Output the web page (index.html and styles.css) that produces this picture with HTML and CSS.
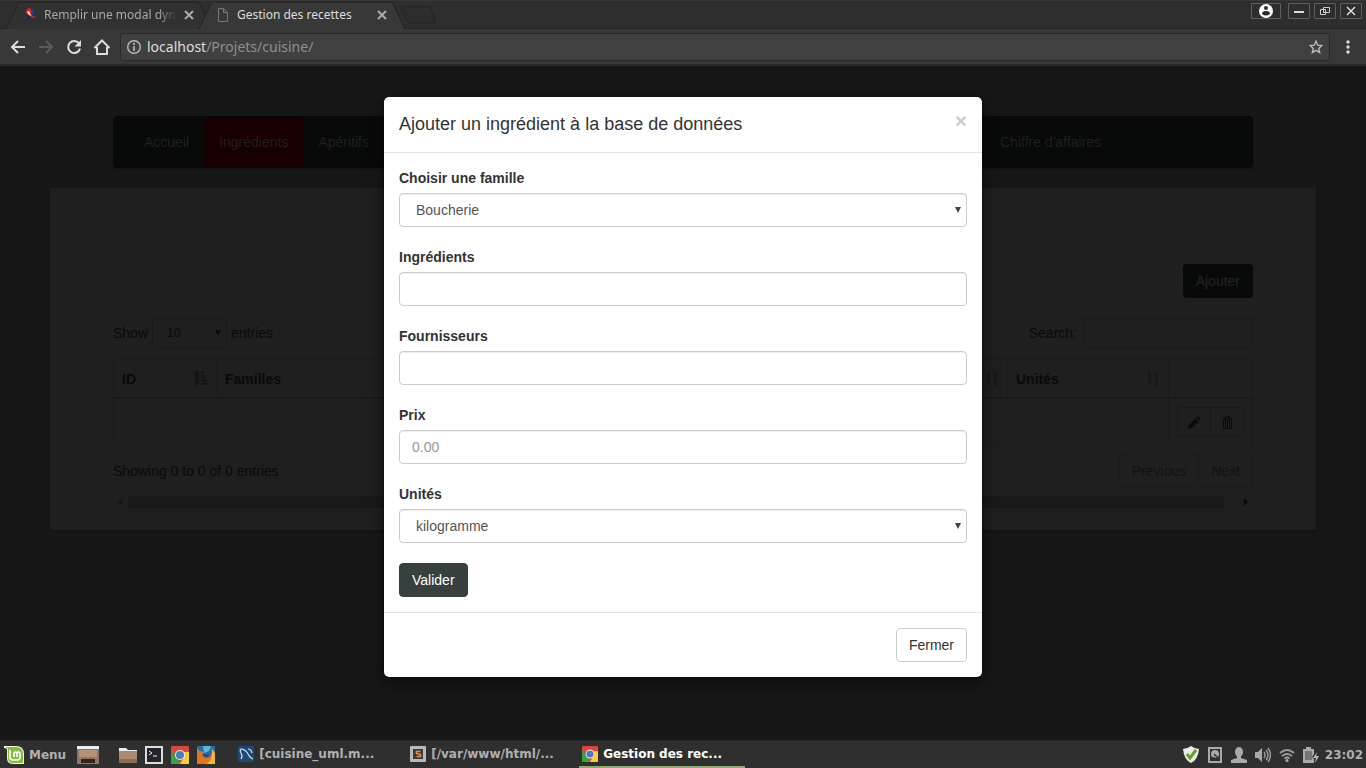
FILE: index.html
```html
<!DOCTYPE html>
<html lang="fr">
<head>
<meta charset="utf-8">
<title>Gestion des recettes</title>
<link rel="stylesheet" href="styles.css">
</head>
<body>
<svg class="defs" aria-hidden="true">
  <defs>
    <symbol id="close" viewBox="0 0 10 10"><path d="M1 1l8 8M9 1l-8 8" fill="none" stroke="currentColor" stroke-width="2"/></symbol>
    <symbol id="caret" viewBox="0 0 6 6"><path d="M0 0h6L3 6z" fill="currentColor"/></symbol>
    <symbol id="sort" viewBox="0 0 14 15"><path d="M2 0h3v10h2L3.500 15 0 10h2zM12 15H9V5H7l3.500-5L14 5h-2z" fill="currentColor"/></symbol>
    <symbol id="chrome" viewBox="0 0 18 18">
      <rect width="18" height="18" rx="1" fill="#e0443a"/><path d="M0 4l6 8 4 6H1q-1 0-1-1z" fill="#38a345"/><path d="M9 6h9v11q0 1-1 1H9l4-7z" fill="#f6cf3a"/><circle cx="9" cy="9" r="5" fill="#eee"/><circle cx="9" cy="9" r="4" fill="#3f7fc4"/>
    </symbol>
  </defs>
</svg>
<div class="desktop">
  <header class="chrome">
    <div class="tabstrip">
      <div class="tab">
        <svg class="tab-shape" viewBox="0 0 206 28" preserveAspectRatio="none"><path d="M0 28L12 3q1-2 3-2h176q2 0 3 2l12 25" fill="#313131" stroke="#222"/></svg>
        <svg class="fav" viewBox="0 0 14 14"><path d="M6 8l3-1 1 2-4 2-3 3 2-4z" fill="#14237f"/><path d="M3 3q1-3 4-3l2 3v5l4 1-4 1-3-3-3-2z" fill="#e8201b"/><path d="M4 4l2-1 2 5-2-1z" fill="#f5ede8"/><path d="M9 1l2 3-1 4-2-3z" fill="#253ca6"/></svg>
        <span class="tab-title fade">Remplir une modal dynamique</span>
        <button class="tab-close" aria-label="Fermer l'onglet"><svg width="10" height="10"><use href="#close"/></svg></button>
      </div>
      <div class="tab active">
        <svg class="tab-shape" viewBox="0 0 206 28" preserveAspectRatio="none"><path d="M0 28L12 3q1-2 3-2h176q2 0 3 2l12 25" fill="#383838" stroke="#222"/></svg>
        <svg class="fav" viewBox="0 0 14 14"><path d="M2.500.500h5l4 4v9h-9zM7.500.500v4h4" fill="none" stroke="#777"/></svg>
        <span class="tab-title">Gestion des recettes</span>
        <button class="tab-close" aria-label="Fermer l'onglet"><svg width="10" height="10"><use href="#close"/></svg></button>
      </div>
      <button class="new-tab" aria-label="Nouvel onglet"><svg width="36" height="18" viewBox="0 0 36 18"><path d="M3 1h24q2 0 3 2l4 12q1 2-1 2H9q-2 0-3-2L1 3q0-2 2-2z" fill="#2d2d2d" stroke="#242424"/></svg></button>
      <div class="window-buttons">
        <button class="profile" aria-label="Profil"><svg width="14" height="14" viewBox="0 0 14 14"><circle cx="7" cy="7" r="7" fill="#fff"/><circle cx="7" cy="4" r="2" fill="#2c2c2c"/><path d="M3 10q0-3 4-3t4 3q-4 3-8 0z" fill="#2c2c2c"/></svg></button>
        <button aria-label="Réduire"><svg width="10" height="10" viewBox="0 0 10 10"><path d="M0 6h10" stroke="#ddd" stroke-width="2"/></svg></button>
        <button aria-label="Restaurer"><svg width="10" height="10" viewBox="0 0 10 10"><path d="M3.500 1.500h6v5h-6zM.500 3.500h5v5h-5z" fill="none" stroke="#ccc"/></svg></button>
        <button aria-label="Fermer"><svg width="10" height="10" viewBox="0 0 10 10"><path d="M1 1l8 8M9 1L1 9" stroke="#ddd" stroke-width="1.500"/></svg></button>
      </div>
    </div>
    <div class="toolbar">
      <button aria-label="Précédent"><svg width="16" height="16" viewBox="0 0 16 16"><path d="M15 8H2M8 2L2 8l6 6" fill="none" stroke="#ddd" stroke-width="2"/></svg></button>
      <button aria-label="Suivant"><svg width="16" height="16" viewBox="0 0 16 16"><path d="M1 8h13M8 2l6 6-6 6" fill="none" stroke="#5c5c5c" stroke-width="2"/></svg></button>
      <button aria-label="Actualiser"><svg width="16" height="16" viewBox="0 0 16 16"><path d="M13 4.500A6 6 0 1 0 14 9.500" fill="none" stroke="#ddd" stroke-width="2"/><path d="M15 1v6.500H8.500z" fill="#ddd"/></svg></button>
      <button aria-label="Accueil"><svg width="18" height="16" viewBox="0 0 18 16"><path d="M1.500 9L9 1.500 16.500 9M4 8v7h10V8" fill="none" stroke="#ddd" stroke-width="2"/></svg></button>
      <div class="omnibox">
        <svg width="14" height="14" viewBox="0 0 14 14"><circle cx="7" cy="7" r="6.300" fill="none" stroke="#bbb" stroke-width="1.400"/><path d="M7 6v5M7 3v2" stroke="#bbb" stroke-width="1.600"/></svg>
        <span class="url"><b>localhost</b>/Projets/cuisine/</span>
        <svg width="14" height="14" viewBox="0 0 14 14"><path d="M7 1.200l1.700 4 4.200.4-3.200 2.800 1 4.200L7 10.400l-3.700 2.200 1-4.200L1.100 5.600l4.200-.4z" fill="none" stroke="#bbb" stroke-width="1.400"/></svg>
      </div>
      <button class="menu" aria-label="Menu"><svg width="4" height="14" viewBox="0 0 4 14"><circle cx="2" cy="2" r="1.700" fill="#ddd"/><circle cx="2" cy="7" r="1.700" fill="#ddd"/><circle cx="2" cy="12" r="1.700" fill="#ddd"/></svg></button>
    </div>
  </header>

  <main class="viewport">
    <nav class="navbar">
      <a href="#">Accueil</a>
      <a href="#" class="current">Ingrédients</a>
      <a href="#">Apéritifs</a>
      <a href="#" class="last">Chiffre d'affaires</a>
    </nav>
    <section class="panel">
      <div class="add-row"><button class="add">Ajouter</button></div>
      <div class="filters">
        <label>Show
          <span class="select-wrap small"><select><option>10</option></select><svg><use href="#caret"/></svg></span>
          entries</label>
        <label>Search:<input type="search"></label>
      </div>
      <table class="grid">
        <colgroup><col class="c-id"><col><col class="c-unit"><col class="c-act"></colgroup>
        <thead>
          <tr>
            <th><div class="th">ID<svg class="sorted" width="15" height="15" viewBox="0 0 15 15"><path d="M2 0h4v10h1l-3.500 5L0 10h2zM8 0h3v3H8zM8 4h4v3H8zM8 8h6v3H8zM8 12h7v2H8z" fill="currentColor"/></svg></div></th>
            <th><div class="th">Familles<svg width="14" height="15"><use href="#sort"/></svg></div></th>
            <th><div class="th">Unités<svg width="14" height="15"><use href="#sort"/></svg></div></th>
            <th></th>
          </tr>
        </thead>
        <tbody>
          <tr>
            <td colspan="3"></td>
            <td>
              <div class="actions">
                <button aria-label="Modifier"><svg width="13" height="13" viewBox="0 0 13 13"><path d="M0 13l1-4 6.500-6.500 3 3L4 12zM8.500 1.500L10 0l3 3-1.500 1.500z" fill="currentColor"/></svg></button>
                <button aria-label="Supprimer"><svg width="11" height="13" viewBox="0 0 11 13"><path d="M3.500 2V.500h4V2M0 2.500h11M1.500 4v8.500h8V4zM3.500 4v8M5.500 4v8M7.500 4v8" fill="none" stroke="currentColor"/></svg></button>
              </div>
            </td>
          </tr>
        </tbody>
      </table>
      <div class="table-foot">
        <span>Showing 0 to 0 of 0 entries</span>
        <div class="pager"><a href="#">Previous</a><a href="#">Next</a></div>
      </div>
      <div class="hscroll"><svg width="15" height="12"><path d="M9 2v8L5 6z" fill="#151515"/></svg><i></i><svg width="15" height="12"><path d="M6 2v8l4-4z" fill="#080808"/></svg></div>
    </section>

    <div class="overlay">
      <div class="modal" role="dialog" aria-labelledby="modal-title">
        <div class="modal-header">
          <h4 id="modal-title">Ajouter un ingrédient à la base de données</h4>
          <button class="modal-close" aria-label="Fermer">×</button>
        </div>
        <form class="modal-body">
          <div class="field"><label for="famille">Choisir une famille</label>
            <span class="select-wrap"><select id="famille"><option>Boucherie</option></select><svg><use href="#caret"/></svg></span></div>
          <div class="field"><label for="ingredient">Ingrédients</label><input id="ingredient" type="text"></div>
          <div class="field"><label for="fournisseur">Fournisseurs</label><input id="fournisseur" type="text"></div>
          <div class="field"><label for="prix">Prix</label><input id="prix" type="text" placeholder="0.00"></div>
          <div class="field"><label for="unite">Unités</label>
            <span class="select-wrap"><select id="unite"><option>kilogramme</option></select><svg><use href="#caret"/></svg></span></div>
          <button type="button" class="btn primary">Valider</button>
        </form>
        <div class="modal-footer"><button class="btn">Fermer</button></div>
      </div>
    </div>
  </main>

  <footer class="taskbar">
    <button class="mint"><svg width="20" height="20" viewBox="0 0 20 20"><path d="M0 1h12q8 0 8 8v10H9q-6 0-6-6V5Q3 3 0 3z" fill="#f2f7ea"/><path d="M1.500 2H12q7 0 7 7v9H9q-5 0-5-5V5q0-2-2.500-3z" fill="#84bf42"/><path d="M6 5v7q0 3 3 3h4q3 0 3-3V9q0-2-1.500-2T13 9v3M13 9q0-2-1.500-2T10 9v3" fill="none" stroke="#fff" stroke-width="1.600"/></svg>Menu</button>
    <div class="launchers">
      <button class="desk" aria-label="Bureau"><svg width="22" height="18" viewBox="0 0 22 18"><path d="M0 3h22v15H0z" fill="#95735d"/><path d="M2 4h18v7H2z" fill="#b7927a"/><path d="M0 0h22v3H0z" fill="#eee"/><path d="M4 13h14v4H4z" fill="#33251c"/></svg></button>
      <button aria-label="Fichiers"><svg width="18" height="18" viewBox="0 0 18 18"><path d="M0 2h7l2 2h9v3H0z" fill="#eee"/><path d="M0 5h18v11H0z" fill="#ab8a72"/><path d="M0 13h18v4H0z" fill="#8c6c57"/></svg></button>
      <button aria-label="Terminal"><svg width="18" height="18" viewBox="0 0 18 18"><rect x="1" y="1" width="16" height="16" fill="#24242d" stroke="#ddd" stroke-width="2"/><path d="M4 5l3 2-3 2M8 10h4" fill="none" stroke="#eee"/></svg></button>
      <button aria-label="Chrome"><svg width="18" height="18"><use href="#chrome"/></svg></button>
      <button aria-label="Firefox"><svg width="18" height="18" viewBox="0 0 18 18"><rect width="18" height="18" rx="1" fill="#2a6ca8"/><path d="M6 0h8l-2 5-5 2z" fill="#5db4dc"/><path d="M0 2l3 3 4 1-2 3 3 3 5-1 2-5-1-4 4 4v12H0z" fill="#e2741b"/><path d="M15 3l3 5v10H9q7-3 6-15z" fill="#f6b63b"/><path d="M6 8l4 1 2-2-1 4-4-1z" fill="#174573"/></svg></button>
    </div>
    <div class="tasks">
      <button><svg width="16" height="16" viewBox="0 0 16 16"><rect width="16" height="16" rx="1" fill="#1d4a75"/><path d="M3 13q2-3 0-6-2-4 1-4 4 1 6 5l2 3 3 2M10 3q3 0 4 4" fill="none" stroke="#d5e3ee" stroke-width="1.200"/></svg>[cuisine_uml.m...</button>
      <button><svg width="16" height="16" viewBox="0 0 16 16"><rect width="16" height="16" rx="1" fill="#b9b9b9"/><rect x="3" y="3" width="10" height="10" fill="#3a3a3a"/><path d="M10.500 5.500h-4v2l4 1v2h-4" fill="none" stroke="#ed8a42" stroke-width="1.500"/></svg>[/var/www/html/...</button>
      <button class="on"><svg width="16" height="16"><use href="#chrome"/></svg>Gestion des rec...</button>
    </div>
    <div class="tray">
      <svg width="16" height="17" viewBox="0 0 16 17"><path d="M8 0q4 3 8 3-1 11-8 14Q1 14 0 3q4 0 8-3z" fill="#e9ebe6"/><path d="M4 8l3 4 6-8" fill="none" stroke="#66a02d" stroke-width="3"/></svg>
      <svg width="16" height="16" viewBox="0 0 16 16"><path d="M2 1h12v14H2z" fill="none" stroke="#aaa" stroke-width="2"/><circle cx="8" cy="7" r="4" fill="#aaa"/><path d="M7 7l5 5M5 11h3" stroke="#333" stroke-width="1.500"/></svg>
      <svg width="16" height="16" viewBox="0 0 16 16"><ellipse cx="8" cy="5" rx="4" ry="5" fill="#aaa"/><path d="M6 8h4v3l6 2v3H0v-3l6-2z" fill="#aaa"/></svg>
      <svg width="16" height="16" viewBox="0 0 16 16"><path d="M0 5h3l4-4v14l-4-4H0z" fill="#aaa"/><path d="M9 5q2 3 0 6M11 3q4 5 0 10M13 1q5 7 0 14" fill="none" stroke="#999" stroke-width="1.500"/></svg>
      <svg width="16" height="16" viewBox="0 0 16 16"><path d="M1 6q7-6 14 0M3 9q5-4 10 0M5.500 11.500q2.500-2 5 0" fill="none" stroke="#999" stroke-width="1.800"/><circle cx="8" cy="13.500" r="1.500" fill="#aaa"/></svg>
      <svg width="16" height="16" viewBox="0 0 16 16"><path d="M3 0h5v2h3v5l-2 3 2 2v4H0V2h3z" fill="#aaa"/><path d="M2 4h7v9H2z" fill="#777"/><path d="M14 5l-4 6h3l-1 5 4-7h-3z" fill="#bbb"/></svg>
      <time>23:02</time>
    </div>
  </footer>
</div>
</body>
</html>
```
FILE: styles.css
```css
* { box-sizing: border-box; }
body { margin: 0; background: #171717; font: 14px/20px "Liberation Sans", Arial, sans-serif; }
button, input, select { font: inherit; color: inherit; margin: 0; }
button { padding: 0; border: 0; background: none; }
a { color: inherit; text-decoration: none; }
svg { display: block; flex: none; }
.defs { position: absolute; width: 0; height: 0; }
.desktop { min-height: 100vh; display: flex; flex-direction: column; }

/* Browser window */
.chrome { font-family: "Noto Sans", sans-serif; background: #383838; border-bottom: 2px solid #292929; }
.tabstrip { display: flex; height: 29px; padding-left: 6px; background: #2e2e2e; border-top: 1px solid #383838; border-bottom: 1px solid #242424; }
.tab { position: relative; display: flex; align-items: center; width: 206px; margin-right: -13px; padding: 0 18px 0 17px; gap: 7px; height: 28px; color: #a8a8a8; font-size: 12px; }
.tab.active { z-index: 1; color: #ddd; }
.tab > * { position: relative; }
.tab-shape.tab-shape { position: absolute; inset: 0; width: 100%; height: 28px; }
.fav { width: 14px; height: 14px; }
.tab-title { flex: 1; overflow: hidden; white-space: nowrap; }
.fade { mask-image: linear-gradient(to right, #000 86%, transparent); }
.tab-close { color: #aaa; }
.new-tab { margin-left: 9px; }
.window-buttons { display: flex; gap: 4px; margin-left: auto; padding: 2px 4px 0 0; }
.window-buttons button { display: grid; place-items: center; width: 22px; height: 16px; border: 1px solid #5f5f5f; border-radius: 1px; }
.window-buttons .profile { width: 30px; margin-right: 3px; }
.toolbar { display: flex; align-items: center; height: 35px; padding: 0 4px; }
.toolbar button { display: grid; place-items: center; width: 28px; height: 28px; }
.omnibox { flex: 1; display: flex; align-items: center; gap: 6px; height: 28px; margin-left: 4px; padding: 0 6px; background: #404040; border: 1px solid #2a2a2a; border-radius: 3px; }
.url { flex: 1; font-size: 14px; color: #8e8e8e; }
.url b { font-weight: 400; color: #ddd; }
.toolbar .menu { margin: 0 0 0 4px; }

/* Dimmed page */
.viewport { position: relative; flex: 1; padding: 50px 50px 0; color: #0a0a0a; }
.navbar { display: flex; height: 52px; margin: 0 63px 20px; padding: 0 136px 0 15px; border: 1px solid #070908; border-radius: 4px; background: #080a09; color: #1f1f1f; box-shadow: 0 1px 2px #111; }
.navbar a { padding: 15px; }
.navbar .current { background: #180000; }
.navbar .last { margin-left: auto; }
.panel { padding: 76px 63px 22px; background: #1f1f1f; box-shadow: 0 1px 2px #111; }
.add-row { display: flex; justify-content: flex-end; margin-bottom: 20px; }
.add { height: 34px; padding: 0 13px; border-radius: 4px; background: #080a09; color: #222; }
.filters { display: flex; justify-content: space-between; margin-bottom: 11px; }
.filters label { display: flex; align-items: center; gap: 4px; }
.filters input { width: 170px; height: 30px; margin-left: 2px; border: 1px solid #191919; border-radius: 3px; background: #1f1f1f; }
.select-wrap { position: relative; display: block; }
.select-wrap select { appearance: none; width: 100%; }
.select-wrap svg { position: absolute; right: 6px; top: 14px; width: 6px; height: 6px; pointer-events: none; }
.select-wrap.small { width: 75px; }
.select-wrap.small select { height: 30px; padding: 0 14px; font-size: 12px; border: 1px solid #191919; border-radius: 3px; background: #1f1f1f; }
.select-wrap.small svg { top: 12px; }
.grid { width: 100%; table-layout: fixed; border-collapse: separate; border-spacing: 0; border: 1px solid #1b1b1b; border-width: 1px 0 0 1px; }
.c-id { width: 103px; }
.c-unit { width: 161px; }
.c-act { width: 84px; }
.grid th, .grid td { padding: 8px; border-right: 1px solid #1b1b1b; border-bottom: 1px solid #1b1b1b; text-align: left; }
.grid th { height: 39px; border-bottom: 2px solid #1a1a1a; }
.th { display: flex; align-items: center; justify-content: space-between; }
.th svg { color: #191919; }
.th .sorted { color: #151515; }
.actions { display: flex; }
.actions button { display: grid; place-items: center; width: 34px; height: 30px; border: 1px solid #191919; border-radius: 3px 0 0 3px; }
.actions button + button { margin-left: -1px; border-radius: 0 3px 3px 0; }
.table-foot { display: flex; justify-content: space-between; align-items: center; margin: 8px 0; }
.pager { display: flex; border: 1px solid #1b1b1b; border-radius: 4px; color: #131313; }
.pager a { padding: 6px 12px; }
.pager a + a { border-left: 1px solid #1b1b1b; }
.hscroll { display: flex; align-items: center; }
.hscroll i { flex: 1; height: 12px; margin-right: 14px; background: #191919; }

/* Dialog */
.overlay { position: absolute; inset: 0; display: flex; justify-content: center; align-items: flex-start; padding-top: 30px; }
.modal { width: 600px; border: 1px solid rgba(0, 0, 0, .2); border-radius: 6px; background: #fff; background-clip: padding-box; color: #333; box-shadow: 0 5px 15px rgba(0, 0, 0, .5); }
.modal-header { display: flex; justify-content: space-between; align-items: flex-start; padding: 15px; border-bottom: 1px solid #e5e5e5; }
.modal-header h4 { margin: 0; font-size: 18px; font-weight: 500; line-height: 25px; }
.modal-close { font-size: 21px; line-height: 18px; font-weight: 700; color: #ccc; }
.modal-body { padding: 15px; }
.field { margin-bottom: 20px; }
.field label { display: block; margin-bottom: 5px; font-weight: 700; }
.field input, .field select { display: block; width: 100%; height: 34px; padding: 6px 12px; border: 1px solid #ccc; border-radius: 4px; background: #fff; color: #555; box-shadow: inset 0 1px 1px rgba(0, 0, 0, .075); }
.field select { padding: 0 16px; }
.field svg { color: #444; }
.field input::placeholder { color: #999; }
.btn { display: block; height: 34px; padding: 0 12px; border: 1px solid #ccc; border-radius: 4px; background: #fff; }
.btn.primary { background: #373f3f; border-color: #373f3f; color: #fff; }
.modal-footer { display: flex; justify-content: flex-end; padding: 15px; border-top: 1px solid #e5e5e5; }

/* Desktop panel */
.taskbar { display: flex; align-items: stretch; height: 28px; background: #2f2f2f; border-top: 1px solid #262626; color: #b0b0b0; font: bold 12px/16px "DejaVu Sans", sans-serif; }
.taskbar button { display: flex; align-items: center; gap: 5px; white-space: nowrap; }
.mint { padding-left: 4px; }
.launchers { display: flex; gap: 8px; margin-left: 11px; }
.launchers .desk { margin-right: 12px; }
.tasks { display: flex; flex: 1; gap: 6px; margin-left: 20px; }
.taskbar .tasks button { width: 166px; padding-left: 3px; border-bottom: 2px solid transparent; }
.taskbar .tasks .on { color: #fff; border-bottom-color: #8fa876; }
.tray { display: flex; align-items: center; gap: 8px; padding-right: 3px; }
.tray time { margin-left: -2px; }
```
